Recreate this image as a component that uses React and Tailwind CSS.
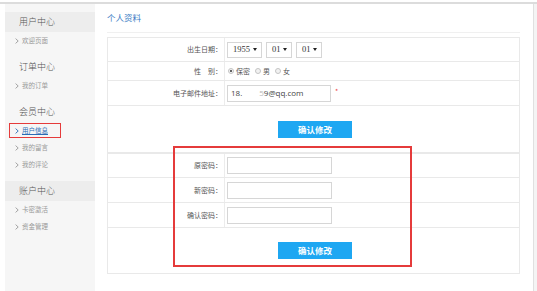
import React from "react";

const groups = [
  { title: "用户中心", dark: true, items: ["欢迎页面"] },
  { title: "订单中心", items: ["我的订单"] },
  { title: "会员中心", items: ["用户信息", "我的留言", "我的评论"], active: "用户信息" },
  { title: "账户中心", dark: true, items: ["卡密激活", "资金管理"] },
];

function Chevron({ className }) {
  return (
    <svg width="4" height="6" viewBox="0 0 4 6" className={className}>
      <path d="M0.6 0.6 L3.2 3 L0.6 5.4" fill="none" stroke="currentColor" strokeWidth="0.9" />
    </svg>
  );
}

function Select({ value, width }) {
  return (
    <div
      className="flex h-[16px] items-center justify-between border border-[#d6d6d6] bg-white pl-[5px] pr-[4px] text-[8.5px] text-[#333]"
      style={{ width }}
    >
      <span className="font-['Liberation_Serif',serif]">{value}</span>
      <svg width="4" height="3" viewBox="0 0 4 3">
        <path d="M0 0 H4 L2 3 Z" fill="#222" />
      </svg>
    </div>
  );
}

function Radio({ checked, label }) {
  return (
    <span className="mr-[5px] flex items-center gap-[2px]">
      <span className="flex h-[6px] w-[6px] items-center justify-center rounded-full border border-[#c4c4c4] bg-[#f2f2f2]">
        {checked && <span className="h-[2px] w-[2px] rounded-full bg-[#333]" />}
      </span>
      <span>{label}</span>
    </span>
  );
}

function Row({ label, children, h, top }) {
  return (
    <div className={`flex border-b border-[#e9e9e9] ${top ? "border-t" : ""}`} style={{ height: h }}>
      <div className="flex w-[117px] shrink-0 items-center justify-end border-r border-[#ececec] pr-[2px] text-[7px] text-[#555]">
        {label}
      </div>
      <div className="flex flex-1 items-center gap-[4px] pl-[2px] text-[7px] text-[#555]">{children}</div>
    </div>
  );
}

function Button({ h }) {
  return (
    <div className="flex items-center justify-center border-b border-[#e9e9e9] pl-[3px]" style={{ height: h }}>
      <button className="h-[17px] w-[74px] bg-[#1ea7f2] text-[8.5px] font-bold text-white">确认修改</button>
    </div>
  );
}

export default function App() {
  return (
    <div className="relative h-[291px] w-[537px] overflow-hidden bg-white font-['Noto_Sans_CJK_SC',sans-serif]">
      <div className="mt-[2px] h-[2px] bg-[#dcdcdc]" />
      <div className="flex h-[287px]">
        <aside className="ml-[5px] w-[90px] shrink-0 bg-[#f6f6f6] pt-[8px]">
          {groups.map((g) => (
            <div key={g.title} className="pb-[8px]">
              <div className={`flex h-[20px] items-center pl-[14px] text-[9px] font-light text-[#555] ${g.dark ? "bg-[#ededed]" : ""}`}>
                {g.title}
              </div>
              {g.items.map((it) => {
                const on = it === g.active;
                return (
                  <div key={it} className="flex h-[17px] items-center pl-[10px]">
                    <div
                      className={`flex items-center gap-[3px] text-[6.5px] ${
                        on ? "text-[#2b6cb5]" : "text-[#999]"
                      }`}
                    >
                      <Chevron />
                      <span className={on ? "underline" : ""}>{it}</span>
                    </div>
                  </div>
                );
              })}
            </div>
          ))}
        </aside>
        <main className="ml-[5px] flex-1 border-r border-[#e0e0e0] pl-[7px] pr-[13px]">
          <div className="flex h-[29px] items-center border-b border-[#f0f0f0] pb-[1px] text-[8.5px] text-[#3a7cc4]">
            个人资料
          </div>
          <div className="mt-[4px] border-x border-t border-[#e9e9e9]">
            <Row label="出生日期：" h={24}>
              <Select value="1955" width="35px" />
              <Select value="01" width="26px" />
              <Select value="01" width="26px" />
            </Row>
            <Row label={<span>性&emsp;别：</span>} h={19}>
              <div className="ml-[1px] flex items-center">
                <Radio checked label="保密" />
                <Radio label="男" />
                <Radio label="女" />
              </div>
            </Row>
            <Row label="电子邮件地址：" h={25}>
              <div className="flex h-[17px] w-[104px] items-center border border-[#d6d6d6] pl-[3px] font-['Open_Sans',sans-serif] text-[8px] text-[#444]">
                18.<span className="w-[17px]" />
                <span className="text-[#bbb]">5</span>9@qq.com
              </div>
              <span className="mb-[4px] text-[7px] text-[#e44]">*</span>
            </Row>
            <Button h={47} />
            <Row label="原密码：" h={25} top>
              <div className="h-[17px] w-[105px] border border-[#d6d6d6]" />
            </Row>
            <Row label="新密码：" h={25}>
              <div className="h-[17px] w-[105px] border border-[#d6d6d6]" />
            </Row>
            <Row label="确认密码：" h={25}>
              <div className="h-[17px] w-[105px] border border-[#d6d6d6]" />
            </Row>
            <Button h={46} />
          </div>
        </main>
        <div className="w-[3px] shrink-0 bg-[#f4f4f4]" />
      </div>
      <div className="pointer-events-none absolute left-[9px] top-[123px] h-[15px] w-[52px] border-[1.5px] border-[#e53b3b]" />
      <div className="pointer-events-none absolute left-[173px] top-[146px] h-[121px] w-[239px] border-2 border-[#e53b3b]" />
    </div>
  );
}
